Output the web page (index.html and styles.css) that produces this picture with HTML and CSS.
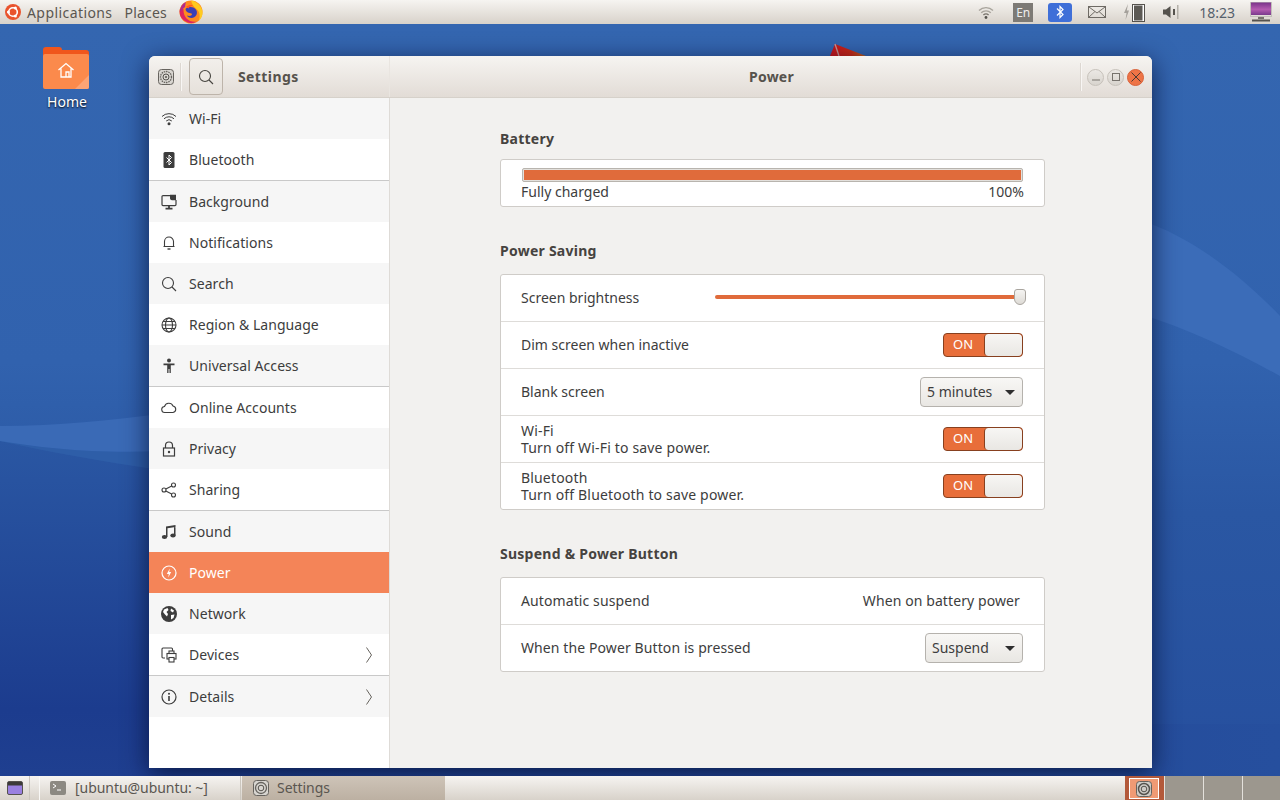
FILE: index.html
```html
<!DOCTYPE html>
<html lang="en">
<head>
<meta charset="utf-8">
<title>Settings</title>
<link rel="stylesheet" href="styles.css">
</head>
<body>
<header class="top-panel">
  <div class="top-left">
    <svg class="ubuntu-logo" viewBox="0 0 16 16" width="16" height="16"><circle cx="8" cy="8" r="8" fill="#e9532d"/><circle cx="8" cy="8" r="4.300" fill="none" stroke="#fff" stroke-width="1.600"/><circle cx="3.400" cy="8" r="1.500" fill="#fff"/><circle cx="10.400" cy="4" r="1.500" fill="#fff"/><circle cx="10.400" cy="12" r="1.500" fill="#fff"/></svg>
    <span class="menu-apps">Applications</span>
    <span class="menu-places">Places</span>
    <svg class="firefox" viewBox="0 0 24 24" width="24" height="24"><circle cx="12" cy="12" r="11.500" fill="#ff8a1f"/><path d="M1 9a11.500 11.500 0 0 0 17 12.500C10 23 4 17 4.500 9z" fill="#e0245e"/><path d="M.8 12a11.500 11.500 0 0 1 6-10L6 7z" fill="#b32a8a"/><path d="M12 .500c5 .5 11 5 11.500 11.500.3 4-1.500 7-4 9 2-4 1.500-9-2-12-2-2-4-3-5.500-8.500z" fill="#ffcb1f"/><path d="M6.500 9c3-3 9-2.500 11 1.500 1.500 3.500-1 7.500-5 7.500-2 0-4-1-4.500-2.500 2 1 5 .5 5-1.500-1-1.500-6-.5-6.500-5z" fill="#3b3fb6"/><path d="M7 7c2-2 5-2.500 7-1.500-2 .5-4 1.500-4.500 3z" fill="#ff5a1f"/></svg>
  </div>
  <div class="top-right">
    <svg class="tray-wifi" viewBox="0 0 16 16" width="16" height="16" fill="none" stroke="#a8a49c" stroke-width="1.400"><path d="M1 6.500a10 10 0 0 1 14 0M3.200 8.800a7 7 0 0 1 9.600 0"/><path d="M5.400 11a4 4 0 0 1 5.200 0" stroke="#77736c"/><circle cx="8" cy="13.500" r="1.400" fill="#55524d" stroke="none"/></svg>
    <span class="tray-lang">En</span>
    <span class="tray-bt"><svg viewBox="0 0 10 16" width="10" height="16" fill="none" stroke="#fff" stroke-width="1.200"><path d="M2 4.500l6 6-3 3v-11l3 3-6 6"/></svg></span>
    <svg class="tray-mail" viewBox="0 0 18 12" width="18" height="12" fill="none" stroke="#6e6a64"><rect x=".5" y=".5" width="17" height="11"/><path d="M1 1l8 6 8-6M1 11l6-5.500M17 11l-6-5.500"/></svg>
    <svg class="tray-batt" viewBox="0 0 22 20" width="22" height="20"><path d="M5 2L1 11h2.500L2.500 18 6 8.500H3.800z" fill="#a5a19b"/><rect x="9.500" y="2.500" width="12" height="17" fill="#fff" stroke="#55524d"/><rect x="11" y="3.500" width="8.500" height="15" fill="#5c5954"/></svg>
    <svg class="tray-vol" viewBox="0 0 16 14" width="16" height="14"><path d="M0 4.500h3L7.500 1v12L3 9.500H0z" fill="#55524d"/><rect x="10" y="4" width="2" height="6" fill="#55524d"/><rect x="14" y="0" width="1.500" height="14" fill="#b3afa8"/></svg>
    <span class="clock">18:23</span>
    <svg class="tray-monitor" viewBox="0 0 22 20" width="22" height="20"><defs><linearGradient id="mon" x1="0" y1="0" x2="0" y2="1"><stop offset="0" stop-color="#6d2a80"/><stop offset=".6" stop-color="#b45bb0"/><stop offset="1" stop-color="#7a3a8c"/></linearGradient></defs><rect x="1" y="-1" width="20" height="14" fill="url(#mon)"/><rect x="0.500" y="0" width="21" height="14.500" fill="none" stroke="#c2bfba"/><rect x="8" y="15" width="6" height="2" fill="#77736d"/><rect x="2" y="17.500" width="18" height="2" fill="#55524d"/></svg>
  </div>
</header>

<main class="desktop">
  <svg class="wallpaper" viewBox="0 0 1280 752" preserveAspectRatio="none">
    <defs>
      <linearGradient id="wp" x1="0" y1="0" x2="0" y2="1"><stop offset="0" stop-color="#3466b0"/><stop offset=".45" stop-color="#3162ae"/><stop offset=".65" stop-color="#2a57a3"/><stop offset="1" stop-color="#264f9e"/></linearGradient>
      <linearGradient id="wpleft" x1="0" y1="417" x2="0" y2="752" gradientUnits="userSpaceOnUse"><stop offset="0" stop-color="#2a57a3"/><stop offset=".8" stop-color="#1c3c8e"/><stop offset="1" stop-color="#1f3f90"/></linearGradient>
      <linearGradient id="wpstrip" x1="0" y1="0" x2="1" y2="0"><stop offset="0" stop-color="#1f3f90"/><stop offset="1" stop-color="#264f9e"/></linearGradient>
      <linearGradient id="tent" x1="0" y1="0" x2="1" y2="0"><stop offset="0" stop-color="#c8141c"/><stop offset=".6" stop-color="#cc2a14"/><stop offset="1" stop-color="#c46a1c"/></linearGradient>
    </defs>
    <rect width="1280" height="752" fill="url(#wp)"/>
    <rect x="0" y="700" width="1280" height="52" fill="url(#wpstrip)"/>
    <path d="M0 417C50 428 100 437 160 446V752H0z" fill="url(#wpleft)"/>
    <path d="M0 417C40 424 100 430 160 426V446C100 437 50 428 0 417z" fill="#2e5ea8"/>
    <path d="M0 402C60 402 110 396 160 390V427C100 430 40 424 0 417z" fill="#3a6ab6"/>
    <path d="M1140 196C1190 212 1240 250 1280 292V352C1240 330 1190 305 1140 290z" fill="#3b6cb8"/>
    <path d="M835 20L866 32H830z" fill="url(#tent)"/>
    <path d="M835 20L839 32" stroke="#c89a9a" stroke-width="1.300"/>
  </svg>

  <div class="desktop-icon">
    <svg viewBox="0 0 46 42" width="46" height="42"><path d="M0 3a3 3 0 0 1 3-3h13a3 3 0 0 1 3 3h24a3 3 0 0 1 3 3v12H0z" fill="#f0561c"/><path d="M0 9a2 2 0 0 1 2-2h42a2 2 0 0 1 2 2v31a2 2 0 0 1-2 2H2a2 2 0 0 1-2-2z" fill="#fb8a4c"/><path d="M44 42h-12l14-14v12a2 2 0 0 1-2 2z" fill="#fca475"/><path d="M15.500 23l7.500-6.500 7.500 6.500M18 21.500v8.500h10v-8.500M23 30v-5h3v5" fill="none" stroke="#fff" stroke-width="1.300"/></svg>
    <span>Home</span>
  </div>

  <section class="window">
    <header class="titlebar">
      <div class="title-left">
        <svg class="gear" viewBox="0 0 16 16" width="16" height="16" fill="none"><rect x=".5" y=".5" width="15" height="15" rx="3" fill="#d8d5d0" stroke="#66635e"/><circle cx="8" cy="8" r="5.500" stroke="#66635e" stroke-width="1.300" stroke-dasharray="1.500 .8"/><circle cx="8" cy="8" r="3" stroke="#55524d"/><circle cx="8" cy="8" r="1" fill="#55524d"/></svg>
        <span class="vsep"></span>
        <button class="search-btn"><svg viewBox="0 0 16 16" width="16" height="16" fill="none" stroke="#46443f" stroke-width="1.100"><circle cx="7" cy="7" r="5.500"/><path d="M11 11l4 4"/></svg></button>
        <span class="title-settings">Settings</span>
      </div>
      <div class="title-main">
        <span class="title-power">Power</span>
        <div class="win-controls">
          <span class="vsep"></span>
          <span class="wbtn"><svg viewBox="0 0 10 10" width="10" height="10"><path d="M1 8h8" stroke="#77736d" stroke-width="1"/></svg></span>
          <span class="wbtn"><svg viewBox="0 0 10 10" width="10" height="10"><rect x="1.500" y="1.500" width="7" height="7" fill="none" stroke="#77736d"/></svg></span>
          <span class="wbtn close"><svg viewBox="0 0 10 10" width="10" height="10"><path d="M.5 .5l9 9M9.500 .5l-9 9" stroke="#4a3a33" stroke-width="1"/></svg></span>
        </div>
      </div>
    </header>
    <div class="win-body">
      <nav class="sidebar">
        <div class="row alt"><svg class="ico" viewBox="0 0 16 16" fill="none" stroke="#3d3d3d"><path d="M1 5.500a10 10 0 0 1 14 0M3 7.800a7.200 7.200 0 0 1 10 0M5.200 10a4 4 0 0 1 5.600 0"/><circle cx="8" cy="12.800" r="1.500" fill="#3d3d3d" stroke="none"/></svg><span>Wi-Fi</span></div>
        <div class="row"><svg class="ico" viewBox="0 0 16 16"><rect x="2.500" y="0" width="11" height="16" rx="1.500" fill="#3d3d3d"/><path d="M5.500 5.500l5 5L8 13V3l2.500 2.500-5 5" fill="none" stroke="#fff"/></svg><span>Bluetooth</span></div>
        <div class="row alt sep"><svg class="ico" viewBox="0 0 16 16" fill="none" stroke="#3d3d3d" stroke-width="1.200"><path d="M9 1.600H2a1 1 0 0 0-1 1v8a1 1 0 0 0 1 1h12a1 1 0 0 0 1-1V6"/><path d="M9 .8h6v5.500H11A2 2 0 0 1 9 4.500z" fill="#3d3d3d" stroke="none"/><path d="M8 12v2M4.500 14.600h7" stroke-width="1.800"/></svg><span>Background</span></div>
        <div class="row"><svg class="ico" viewBox="0 0 16 16" fill="none" stroke="#3d3d3d" stroke-width="1.100"><path d="M3.500 11.500V6.500a4.500 4.500 0 0 1 9 0v5zM2.500 11.500h11"/><path d="M6.500 14h3" stroke-width="1.400"/></svg><span>Notifications</span></div>
        <div class="row alt"><svg class="ico" viewBox="0 0 16 16" fill="none" stroke="#3d3d3d" stroke-width="1.100"><circle cx="7" cy="7" r="5.500"/><path d="M11 11l4 4"/></svg><span>Search</span></div>
        <div class="row"><svg class="ico" viewBox="0 0 16 16" fill="none" stroke="#3d3d3d" stroke-width="1.100"><circle cx="8" cy="8" r="7"/><ellipse cx="8" cy="8" rx="3.500" ry="7"/><path d="M1 8h14M2 4.500h12M2 11.500h12"/></svg><span>Region &amp; Language</span></div>
        <div class="row alt"><svg class="ico" viewBox="0 0 16 16" fill="#3d3d3d"><circle cx="8" cy="2.500" r="2"/><path d="M2.500 5.500h11v1.800H9.800V15H8.500v-4h-1v4H6.200V7.300H2.500z"/></svg><span>Universal Access</span></div>
        <div class="row sep"><svg class="ico" viewBox="0 0 16 16" fill="none" stroke="#3d3d3d" stroke-width="1.100"><path d="M4 12.500a3 3 0 0 1-.5-6A4.500 4.500 0 0 1 12 6a3.300 3.300 0 0 1 0 6.500z"/></svg><span>Online Accounts</span></div>
        <div class="row alt"><svg class="ico" viewBox="0 0 16 16" fill="none" stroke="#3d3d3d" stroke-width="1.200"><rect x="2.500" y="7" width="11" height="8"/><path d="M4.500 7V4.500a3.500 3.500 0 0 1 7 0V7"/><circle cx="8" cy="11" r="1.200" fill="#3d3d3d" stroke="none"/></svg><span>Privacy</span></div>
        <div class="row"><svg class="ico" viewBox="0 0 16 16" fill="none" stroke="#3d3d3d" stroke-width="1.100"><circle cx="3" cy="8" r="2"/><circle cx="12.500" cy="3" r="2"/><circle cx="12.500" cy="13" r="2"/><path d="M4.800 7l5.900-3.100M4.800 9l5.900 3.100"/></svg><span>Sharing</span></div>
        <div class="row alt sep"><svg class="ico" viewBox="0 0 16 16" fill="#3d3d3d"><path d="M5 2.500L14.500 1v2L6.500 4.300V13H5zM13 1.500h1.500V11H13z"/><ellipse cx="3.500" cy="13" rx="2.700" ry="2"/><ellipse cx="12" cy="11.500" rx="2.700" ry="2"/></svg><span>Sound</span></div>
        <div class="row active"><svg class="ico" viewBox="0 0 16 16" fill="none" stroke="#fff" stroke-width="1.200"><circle cx="8" cy="8" r="7"/><path d="M8.800 3.500L5.800 9h2l-.6 3.500 3-5.500h-2z" fill="#fff" stroke="none"/></svg><span>Power</span></div>
        <div class="row alt"><svg class="ico" viewBox="0 0 16 16"><circle cx="8" cy="8" r="8" fill="#3d3d3d"/><path d="M3 3.500l3.500-1.500 1 2-2 2 1.500 2-1 2.500-2-2L2 6zM10 2.500l3 2-1 2-2.500-1.500zM10 9l3.500-.5-1 3.500-2.500 1.500z" fill="#fff"/></svg><span>Network</span></div>
        <div class="row"><svg class="ico" viewBox="0 0 16 16" fill="none" stroke="#3d3d3d" stroke-width="1.100"><path d="M4 11H2a1 1 0 0 1-1-1V2a1 1 0 0 1 1-1h8.500a1 1 0 0 1 1 1v2"/><rect x="6" y="6.500" width="9" height="5.500" fill="#fff"/><rect x="8" y="4" width="5" height="2.500"/><rect x="8" y="10.500" width="5" height="4.500" fill="#fff"/></svg><span>Devices</span><svg class="chev" viewBox="0 0 6 16" width="6" height="16" fill="none" stroke="#66635e"><path d="M.5 .5l5 7.500-5 7.500"/></svg></div>
        <div class="row alt sep"><svg class="ico" viewBox="0 0 16 16" fill="none" stroke="#3d3d3d" stroke-width="1.200"><circle cx="8" cy="8" r="7"/><path d="M8 7v5" stroke-width="1.600"/><circle cx="8" cy="4.700" r="1" fill="#3d3d3d" stroke="none"/></svg><span>Details</span><svg class="chev" viewBox="0 0 6 16" width="6" height="16" fill="none" stroke="#66635e"><path d="M.5 .5l5 7.500-5 7.500"/></svg></div>
      </nav>
      <div class="content">
        <h2 class="heading battery-heading">Battery</h2>
        <div class="frame battery-frame">
          <div class="levelbar"><div class="levelfill"></div></div>
          <div class="battery-text"><span>Fully charged</span><span>100%</span></div>
        </div>

        <h2 class="heading">Power Saving</h2>
        <div class="frame">
          <div class="frow"><span class="tight">Screen brightness</span><div class="slider"><div class="thumb"></div></div></div>
          <div class="frow"><span class="tight">Dim screen when inactive</span><div class="switch"><span class="on">ON</span><span class="knob"></span></div></div>
          <div class="frow"><span class="tight">Blank screen</span><div class="combo wide"><span>5 minutes</span><i class="arrow"></i></div></div>
          <div class="frow"><div class="two"><span>Wi-Fi</span><span>Turn off Wi-Fi to save power.</span></div><div class="switch"><span class="on">ON</span><span class="knob"></span></div></div>
          <div class="frow"><div class="two"><span>Bluetooth</span><span>Turn off Bluetooth to save power.</span></div><div class="switch"><span class="on">ON</span><span class="knob"></span></div></div>
        </div>

        <h2 class="heading">Suspend &amp; Power Button</h2>
        <div class="frame">
          <div class="frow"><span>Automatic suspend</span><span class="value">When on battery power</span></div>
          <div class="frow"><span>When the Power Button is pressed</span><div class="combo narrow"><span>Suspend</span><i class="arrow"></i></div></div>
        </div>
      </div>
    </div>
  </section>
</main>

<footer class="bottom-panel">
  <div class="show-desktop"><svg viewBox="0 0 16 16" width="16" height="16"><rect x=".5" y="1.500" width="15" height="13" rx="1.500" fill="#9a80e0" stroke="#55524d"/><rect x="1" y="2" width="14" height="3.500" fill="#3c3a38"/></svg></div>
  <div class="task-gap"></div>
  <div class="task"><svg viewBox="0 0 16 16" width="16" height="16"><rect width="16" height="14" y="1" rx="2" fill="#8c8982"/><path d="M3 4l3 2-3 2M7 10h4" fill="none" stroke="#fff"/></svg><span>[ubuntu@ubuntu: ~]</span></div>
  <div class="task selected"><svg viewBox="0 0 16 16" width="16" height="16" fill="none"><rect x=".5" y=".5" width="15" height="15" rx="3" fill="#d8d5d0" stroke="#66635e"/><circle cx="8" cy="8" r="5.500" stroke="#66635e" stroke-width="1.300"/><circle cx="8" cy="8" r="2.800" stroke="#55524d"/></svg><span>Settings</span></div>
  <div class="spacer"></div>
  <div class="pager">
    <div class="ws current"><div class="ws-inner"><svg viewBox="0 0 16 16" width="16" height="16" fill="none"><rect x=".5" y=".5" width="15" height="15" rx="3" fill="#cfccc7" stroke="#66635e"/><circle cx="8" cy="8" r="5.500" stroke="#55524d" stroke-width="1.500"/><circle cx="8" cy="8" r="2.800" stroke="#55524d"/></svg></div></div>
    <div class="ws"></div>
    <div class="ws"></div>
    <div class="ws last"></div>
  </div>
</footer>
</body>
</html>
```
FILE: styles.css
```css
* { box-sizing: border-box; }
html, body { margin: 0; height: 100%; }
body {
  width: 1280px; height: 800px; overflow: hidden;
  display: flex; flex-direction: column;
  font: 14px/17px "Noto Sans", "Liberation Sans", sans-serif;
  color: #3d3d3d;
}
svg { display: block; flex: none; }

.top-panel {
  height: 24px; flex: none; display: flex; justify-content: space-between; align-items: center;
  background: linear-gradient(#f6f4f1, #d8d2ca);
  color: #5a5650; position: relative; z-index: 2;
}
.top-left { display: flex; align-items: center; padding-left: 5px; }
.menu-apps { margin-left: 6px; letter-spacing: .42px; }
.menu-places { margin-left: 12px; letter-spacing: .2px; }
.firefox { margin-left: 12px; }
.top-right { display: flex; align-items: center; height: 24px; }
.tray-wifi { margin-right: 19px; }
.tray-lang { width: 20px; height: 19px; background: #7d7a75; color: #eee; font-size: 12px; line-height: 19px; text-align: center; margin-right: 15px; }
.tray-bt { width: 24px; height: 19px; background: #3f6fd8; border-radius: 3px; display: flex; align-items: center; justify-content: center; margin-right: 16px; }
.tray-mail { margin-right: 17px; }
.tray-batt { margin-right: 18px; }
.tray-vol { margin-right: 20px; }
.clock { margin-right: 15px; color: #55606c; }
.tray-monitor { margin-right: 8px; }

.desktop { flex: 1; position: relative; overflow: hidden; }
.wallpaper { position: absolute; inset: 0; width: 100%; height: 100%; }
.desktop-icon {
  position: absolute; left: 43px; top: 23px; width: 46px;
  display: flex; flex-direction: column; align-items: center; gap: 4px;
  color: #fff; text-shadow: 0 1px 2px #000;
}
.desktop-icon span { padding-left: 2px; }
.window {
  position: absolute; left: 149px; top: 32px; width: 1003px; height: 712px;
  border-radius: 6px 6px 0 0;
  display: flex; flex-direction: column; background: #f2f1ef;
  box-shadow: 0 6px 26px rgba(0, 8, 40, .72);
}

.titlebar {
  height: 42px; flex: none; display: flex;
  background: linear-gradient(#f6f4f1, #e2dcd6);
  border-bottom: 1px solid #d6d1ca;
  border-radius: 6px 6px 0 0;
}
.title-left { width: 241px; display: flex; align-items: center; padding-left: 9px; border-right: 1px solid #e9e5e0; }
.vsep { width: 1px; height: 28px; background: #dcd7d1; box-shadow: 1px 0 0 #f8f6f4; flex: none; }
.gear { margin-right: 6px; }
.search-btn {
  width: 34px; height: 37px; margin: 0 0 0 8px; padding: 0; display: flex; align-items: center; justify-content: center;
  background: linear-gradient(#f2efeb, #e6e1db); border: 1px solid #bdb4aa; border-radius: 4px;
}
.title-settings { margin-left: 15px; font-weight: 700; color: #56524c; letter-spacing: .4px; }
.title-power { font-weight: 700; color: #56524c; letter-spacing: .2px; padding-left: 1px; }
.title-main { flex: 1; position: relative; display: flex; align-items: center; justify-content: center; }
.win-controls { position: absolute; right: 8px; top: 7px; display: flex; align-items: center; gap: 3px; height: 28px; }
.win-controls .vsep { margin-right: 3px; }
.wbtn {
  width: 17px; height: 17px; border-radius: 50%; display: flex; align-items: center; justify-content: center;
  background: linear-gradient(#ebe8e4, #d8d4ce); border: 1px solid #c6c1ba;
}
.close { background: #ee7446; border-color: #d8623a; }

.win-body { flex: 1; display: flex; min-height: 0; }
.sidebar { width: 241px; flex: none; background: #fff; border-right: 1px solid #dedbd7; }
.row { height: 41px; display: flex; align-items: center; padding-left: 12px; padding-right: 17px; background: #fff; }
.row.alt { background: #f6f6f6; }
.row.sep { height: 42px; border-top: 1px solid #c9c9c9; }
.row.active { background: #f48458; color: #fff; }
.ico { width: 16px; height: 16px; margin-right: 12px; }
.row > span { flex: 1; letter-spacing: .05px; }

.content { flex: 1; padding: 31px 107px 0 110px; background: #f2f1ef; letter-spacing: .1px; }
.heading { margin: 0 0 14px; font-size: 14px; line-height: 19px; font-weight: 700; color: #46433f; height: 19px; letter-spacing: .25px; }
.battery-heading { margin-bottom: 11px; }
.frame { background: #fff; border: 1px solid #cfccc8; border-radius: 3px; margin-bottom: 34px; }
.battery-frame { height: 48px; padding: 8px 20px 0 20px; margin-bottom: 34px; }
.levelbar { height: 14px; background: #e3e0dc; border: 1px solid #b8b4ae; border-radius: 2px; padding: 1px; margin: 0 1px; }
.levelfill { height: 100%; background: #e06b3b; }
.battery-text { display: flex; justify-content: space-between; margin-top: 1px; letter-spacing: 0; }
.frow { height: 47px; display: flex; align-items: center; justify-content: space-between; padding: 0 21px 0 20px; border-top: 1px solid #dedcd9; }
.frow:first-child { height: 46px; border-top: 0; }
.frow > span { margin-bottom: 2px; }
.frow > .tight { letter-spacing: 0; }
.two { display: flex; flex-direction: column; letter-spacing: .17px; }
.value { margin-right: 3px; }

.slider { width: 305px; height: 4px; margin-right: 3px; margin-bottom: 2px; background: #e06b3b; border-radius: 2px; position: relative; }
.thumb {
  position: absolute; right: -6px; top: -6px; width: 12px; height: 16px;
  background: linear-gradient(#f5f4f2, #dedbd6); border: 1px solid #a9a59f; border-radius: 3px 3px 6px 6px;
}
.switch {
  width: 80px; height: 24px; display: flex; background: #e86e3a; border: 1px solid #87401f; border-radius: 4px; overflow: hidden;
}
.on { width: 40px; padding-right: 2px; text-align: center; color: #fff; line-height: 21px; font-size: 13px; }
.knob { flex: 1; background: linear-gradient(#f7f6f4, #e9e7e3); border-left: 1px solid #87401f; border-radius: 4px; }
.combo {
  height: 30px; display: flex; align-items: center; justify-content: space-between; padding: 0 6px; letter-spacing: 0;
  background: linear-gradient(#f8f7f5, #e9e7e3); border: 1px solid #b5b2ad; border-radius: 4px;
}
.combo span { margin-bottom: 2px; }
.combo.wide { width: 103px; }
.combo.narrow { width: 98px; }
.arrow { width: 0; height: 0; border-left: 5px solid transparent; border-right: 5px solid transparent; border-top: 5px solid #2e2e2e; margin-right: 1px; }

.bottom-panel {
  height: 24px; flex: none; display: flex; align-items: stretch;
  background: linear-gradient(#f6f4f1, #d8d2ca); color: #5a5650; position: relative; z-index: 2;
}
.show-desktop { width: 30px; display: flex; align-items: center; padding-left: 7px; border-right: 1px solid #cbc6be; }
.task-gap { width: 10px; border-right: 1px solid #f9f8f6; }
.task { width: 201px; display: flex; align-items: center; gap: 9px; padding-left: 10px; border-right: 1px solid #cbc6be; }
.task span { margin-bottom: 2px; letter-spacing: -.05px; }
.task.selected { width: 203px; padding-left: 11px; background: linear-gradient(#cec4b8, #bcb0a2); border-right: 0; margin-left: 1px; gap: 8px; }
.spacer { flex: 1; }
.pager { display: flex; }
.ws { width: 39px; background: #9c978e; border-left: 1px solid #e4e1dc; }
.ws.current { width: 39px; background: #b3593a; border-left: 0; padding: 2px 5px 1px 4px; }
.ws.last { width: 38px; }
.ws-inner { height: 21px; background: #f09a74; border: 1px solid #fff; display: flex; align-items: center; justify-content: center; }
```
